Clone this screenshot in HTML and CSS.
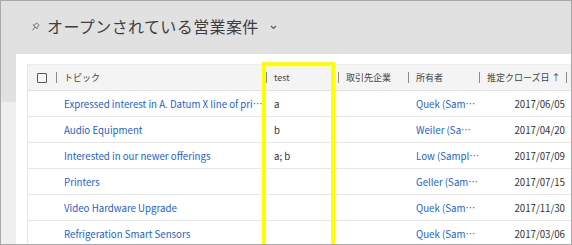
FILE: index.html
```html
<!DOCTYPE html>
<html lang="ja">
<head>
  <meta charset="UTF-8" />
  <title>オープンされている営業案件</title>
  <link rel="stylesheet" href="styles.css">
</head>
<body>
  <div class="page">
    <div class="title-bar">
      <svg class="pin" width="8" height="9" viewBox="0 0 8 9">
        <path d="M4.6 0.8 L7.2 3.4 L6.4 3.9 L4.9 5.6 L5.1 6.9 L1.1 2.9 L2.4 3.1 L4.1 1.6 Z" fill="none" stroke="#666" stroke-width="0.9" stroke-linejoin="round"/>
        <path d="M3.1 4.9 L0.6 8.4" stroke="#666" stroke-width="0.9"/>
      </svg>
      <h1 class="title">オープンされている営業案件</h1>
      <svg class="chevron" width="7" height="5" viewBox="0 0 7 5">
        <path d="M1 1 L3.5 3.5 L6 1" fill="none" stroke="#555" stroke-width="1.1"/>
      </svg>
    </div>

    <div class="panel">
      <div class="grid">
        <div class="grid-head">
          <div class="cell check"><span class="checkbox"></span></div>
          <div class="cell col">トピック</div>
          <div class="cell col">test</div>
          <div class="cell col">取引先企業</div>
          <div class="cell col">所有者</div>
          <div class="cell col">推定クローズ日 <span class="sort">↑</span></div>
          <div class="cell col"></div>
        </div>

        <div class="grid-row">
          <div class="cell"></div>
          <div class="cell link">Expressed interest in A. Datum X line of pri⋯</div>
          <div class="cell">a</div>
          <div class="cell"></div>
          <div class="cell link">Quek (Sam⋯</div>
          <div class="cell date">2017/06/05</div>
          <div class="cell"></div>
        </div>
        <div class="grid-row">
          <div class="cell"></div>
          <div class="cell link">Audio Equipment</div>
          <div class="cell">b</div>
          <div class="cell"></div>
          <div class="cell link">Weiler (Sa⋯</div>
          <div class="cell date">2017/04/20</div>
          <div class="cell"></div>
        </div>
        <div class="grid-row">
          <div class="cell"></div>
          <div class="cell link">Interested in our newer offerings</div>
          <div class="cell">a; b</div>
          <div class="cell"></div>
          <div class="cell link">Low (Sampl⋯</div>
          <div class="cell date">2017/07/09</div>
          <div class="cell"></div>
        </div>
        <div class="grid-row">
          <div class="cell"></div>
          <div class="cell link">Printers</div>
          <div class="cell"></div>
          <div class="cell"></div>
          <div class="cell link">Geller (Sam⋯</div>
          <div class="cell date">2017/07/15</div>
          <div class="cell"></div>
        </div>
        <div class="grid-row">
          <div class="cell"></div>
          <div class="cell link">Video Hardware Upgrade</div>
          <div class="cell"></div>
          <div class="cell"></div>
          <div class="cell link">Quek (Sam⋯</div>
          <div class="cell date">2017/11/30</div>
          <div class="cell"></div>
        </div>
        <div class="grid-row">
          <div class="cell"></div>
          <div class="cell link">Refrigeration Smart Sensors</div>
          <div class="cell"></div>
          <div class="cell"></div>
          <div class="cell link">Quek (Sam⋯</div>
          <div class="cell date">2017/03/06</div>
          <div class="cell"></div>
        </div>
      </div>
    </div>

    <div class="highlight"></div>
  </div>
</body>
</html>
```

FILE: styles.css
```css
body {
  margin: 0;
  font-family: 'Noto Sans CJK JP', 'Noto Sans', sans-serif;
  color: #333;
}

.page {
  position: relative;
  width: 572px;
  height: 245px;
  box-sizing: border-box;
  border: 1px solid #a9a9a9;
  overflow: hidden;
  background: linear-gradient(#e1e1e1 101px, #efefef 101px);
}

.title-bar {
  height: 53px;
  display: flex;
  align-items: center;
  padding-left: 31px;
  box-sizing: border-box;
  padding-bottom: 4px;
}

.pin {
  margin-right: 7px;
  margin-top: 2px;
}

.title {
  margin: 0;
  font-size: 16px;
  font-weight: normal;
  color: #3e3e3e;
  letter-spacing: 0.4px;
}

.chevron {
  margin-left: 11px;
  margin-top: 3px;
}

.panel {
  margin-left: 15px;
  background: #fff;
  padding: 10px 0 0 11px;
  height: 200px;
}

.grid-head,
.grid-row {
  display: grid;
  grid-template-columns: 28px 210px 72px 70px 71px 87px 1fr;
  border-left: 1px solid #e6e6e6;
}

.grid-head {
  height: 27px;
  background: #f4f4f4;
  border-top: 1px solid #ececec;
  border-bottom: 1px solid #e2e2e2;
  box-sizing: border-box;
  font-size: 9px;
  color: #444;
}

.grid-row {
  height: 26px;
  box-sizing: border-box;
  border-bottom: 1px solid #e6e6e6;
  font-size: 9.7px;
}

.cell {
  display: flex;
  align-items: center;
  padding-left: 8px;
  white-space: nowrap;
  overflow: hidden;
}

.grid-head .col {
  position: relative;
  padding-left: 8px;
}

.grid-head .col::before {
  content: '';
  position: absolute;
  left: 0;
  top: 7px;
  height: 11px;
  border-left: 1px solid #8a8a8a;
}

.grid-head .check {
  padding-left: 9px;
}

.checkbox {
  width: 8px;
  height: 8px;
  border: 1px solid #555;
  border-radius: 1px;
}

.sort {
  margin-left: 2px;
  font-size: 9px;
}

.link {
  color: #2462c2;
}

.date {
  justify-content: flex-end;
  padding-left: 0;
  padding-right: 1px;
}

.highlight {
  position: absolute;
  left: 261px;
  top: 61px;
  width: 73px;
  height: 200px;
  box-sizing: border-box;
  border: 4px solid #ffff00;
}
```
